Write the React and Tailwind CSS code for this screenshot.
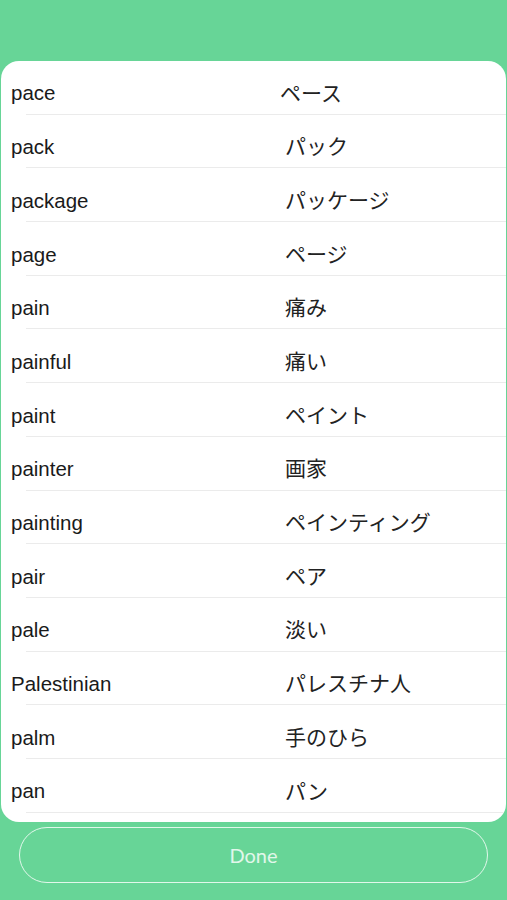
import React from "react";

const rows = [
  ["pace", "ペース"],
  ["pack", "パック"],
  ["package", "パッケージ"],
  ["page", "ページ"],
  ["pain", "痛み"],
  ["painful", "痛い"],
  ["paint", "ペイント"],
  ["painter", "画家"],
  ["painting", "ペインティング"],
  ["pair", "ペア"],
  ["pale", "淡い"],
  ["Palestinian", "パレスチナ人"],
  ["palm", "手のひら"],
  ["pan", "パン"],
];

export default function App() {
  return (
    <div className="w-[507px] h-[900px] bg-[#67d597] flex flex-col overflow-hidden">
      <div className="mt-[61px] mx-[1px] h-[761px] bg-white rounded-[18px] overflow-hidden">
        {rows.map(([en, ja], i) => (
          <div key={en} className="relative h-[53.7px] flex items-center pt-[10px]">
            <div
              className="w-[284px] shrink-0 pl-[10px] mt-[2px] text-[20.5px] text-[#1a1a1a]"
              style={{ fontFamily: "'Liberation Sans', Arial, sans-serif" }}
            >
              {en}
            </div>
            <div
              className={`${i === 0 ? "-ml-[5px]" : ""} -mt-[1px] text-[21px] text-[#222]`}
              style={{ fontFamily: "'Noto Sans CJK JP', sans-serif" }}
            >
              {ja}
            </div>
            <div className="absolute left-[25px] right-0 bottom-0 h-px bg-[#ebebeb]" />
          </div>
        ))}
      </div>
      <div className="mt-[5px] mx-[19px] h-[56px] rounded-full border-[1.5px] border-white/80 flex items-center justify-center">
        <span
          className="text-[20px] text-white/80"
          style={{ fontFamily: "Lato, 'Noto Sans', sans-serif" }}
        >
          Done
        </span>
      </div>
    </div>
  );
}
